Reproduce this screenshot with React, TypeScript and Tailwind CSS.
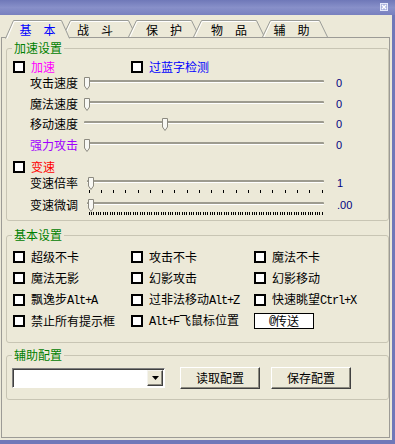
import React from "react";

// 小工具: 复选框、等宽片段、滑块、标签页
function Mono({ children }: { children: React.ReactNode }) {
  return (
    <span className="font-['Liberation_Mono',monospace] text-[12px] tracking-[-1.2px]">
      {children}
    </span>
  );
}

function Check({ label, color = "text-black" }: { label: React.ReactNode; color?: string }) {
  return (
    <div className="flex h-[16px] items-center">
      <span className="h-[12px] w-[12px] shrink-0 border-2 border-black bg-white" />
      <span className={`ml-[6px] whitespace-nowrap leading-[16px] ${color}`}>{label}</span>
    </div>
  );
}

interface SliderProps {
  cls: string;
  width: number;
  thumb: string;
  ticks?: number;
}

function Slider({ cls, width, thumb, ticks = 0 }: SliderProps) {
  const xs =
    ticks > 0
      ? Array.from({ length: ticks }, (_, i) => Math.round((2 + (i * (width - 4)) / (ticks - 1)) * 10) / 10)
      : [];
  return (
    <div className={`relative h-[16px] shrink-0 ${cls}`}>
      <div className="mt-[5px] h-[3px] rounded-[1px] border-t-2 border-[#9d9b8f] bg-white" />
      <svg className={`absolute top-[2px] ${thumb}`} width="6" height="13" viewBox="0 0 6 13">
        <path d="M0.5 0.5H5.5V9L3 12.5L0.5 9Z" fill="#f8f8f4" stroke="#8c8a80" />
      </svg>
      {ticks > 0 && (
        <svg className="absolute left-0 top-[15px]" width={width} height="3">
          {xs.map((x, i) => (
            <line key={i} x1={x} x2={x} y1="0" y2="3" stroke="#000" strokeWidth="1" shapeRendering="crispEdges" />
          ))}
        </svg>
      )}
    </div>
  );
}

function SliderRow({
  label,
  color = "text-black",
  thumb,
  value,
}: {
  label: string;
  color?: string;
  thumb: string;
  value: string;
}) {
  return (
    <div className="flex h-[16px] items-center">
      <span className={`w-[54px] shrink-0 leading-[16px] ${color}`}>{label}</span>
      <Slider cls="w-[240px]" width={240} thumb={thumb} />
      <span className="ml-[12px] font-['Liberation_Sans',sans-serif] text-[11px] leading-[16px] text-[#000080]">
        {value}
      </span>
    </div>
  );
}

function Tab({
  label,
  cls,
  w,
  active = false,
}: {
  label: string;
  cls: string;
  w: number;
  active?: boolean;
}) {
  const b = active ? 18.5 : 17;
  return (
    <div className={`relative h-[18px] shrink-0 ${cls} ${active ? "z-20" : "z-10"}`}>
      <svg className="absolute left-0 top-0" width={w} height="19">
        <path d={`M0.5 ${b}L8.5 0.5H${w - 8.5}L${w - 0.5} ${b}`} fill="#ece9d8" stroke="#9a9c98" />
        <path d={`M2 ${b}L9.3 1.5H${w - 9.3}`} fill="none" stroke="#ffffff" />
      </svg>
      <span className={`relative flex h-full items-center justify-center pt-[2px] leading-[16px] ${active ? "text-[#0000ff]" : "text-black"}`}>
        {label}
      </span>
    </div>
  );
}

function Group({ title, cls, children }: { title: string; cls: string; children: React.ReactNode }) {
  return (
    <div className={`relative ml-[3px] w-[383px] rounded-[3px] border border-[#c8c5b4] ${cls}`}>
      <span className="absolute -top-[8px] left-[5px] bg-[#ece9d8] px-[2px] leading-[14px] text-[#008000]">
        {title}
      </span>
      {children}
    </div>
  );
}

const btn =
  "flex h-[22px] w-[80px] items-center justify-center border border-b-[#404040] border-l-white border-r-[#404040] border-t-white bg-[#ece9d8] shadow-[inset_-1px_-1px_0_#8d8b80] leading-[16px]";

export default function App() {
  return (
    <div className="flex h-[444px] w-[395px] flex-col overflow-hidden bg-[#ece9d8] font-['Noto_Sans_CJK_SC',sans-serif] text-[12px] text-black">
      {/* 标题栏 */}
      <div className="flex h-[15px] shrink-0 items-start justify-end bg-gradient-to-b from-[#6f78b8] via-[#8890c9] to-[#7880bf] pr-[7px] pt-[3px]">
        <svg width="8" height="8" viewBox="0 0 8 8">
          <rect x="0.5" y="0.5" width="7" height="7" fill="#aab2de" stroke="#e4e8fa" />
          <path d="M2 2L6 6M6 2L2 6" stroke="#ffffff" strokeWidth="1.3" />
        </svg>
      </div>

      <div className="flex flex-1">
        <div className="flex w-[392px] flex-col pl-[1px] pr-[2px]">
          {/* 标签页 */}
          <div className="relative z-10 -mb-[1px] flex h-[23px] pt-[5px]">
            <Tab label={"基\u3000本"} cls="ml-[4px] w-[65px]" w={65} active />
            <Tab label={"战\u3000斗"} cls="-ml-[8px] w-[75px] pr-[9px]" w={75} />
            <Tab label={"保\u3000护"} cls="-ml-[9px] w-[72px]" w={72} />
            <Tab label={"物\u3000品"} cls="-ml-[7px] w-[72px]" w={72} />
            <Tab label={"辅\u3000助"} cls="-ml-[3px] w-[66px] pr-[7px]" w={66} />
          </div>

          <div className="h-[401px] border border-[#9c9b96] pl-[1px]">
            {/* 加速设置 */}
            <Group title="加速设置" cls="mt-[10px] h-[173px]">
              <div className="pl-[6px] pt-[10px]">
                <div className="grid grid-cols-[118px_1fr]">
                  <Check label="加速" color="text-[#ff00ff]" />
                  <Check label="过蓝字检测" color="text-[#0000ff]" />
                </div>
                <div className="ml-[17px] flex flex-col gap-[4.5px]">
                  <SliderRow label="攻击速度" thumb="left-0" value="0" />
                  <SliderRow label="魔法速度" thumb="left-0" value="0" />
                  <SliderRow label="移动速度" thumb="left-[78px]" value="0" />
                  <SliderRow label="强力攻击" color="text-[#a000ff]" thumb="left-0" value="0" />
                </div>
                <div className="mt-[6.5px]">
                  <Check label="变速" color="text-[#ff0000]" />
                </div>
                <div className="ml-[17px] flex h-[16px] items-center">
                  <span className="w-[57px] shrink-0 leading-[16px]">变速倍率</span>
                  <Slider cls="w-[237px]" width={237} thumb="left-[1px]" ticks={20} />
                  <span className="ml-[13px] font-['Liberation_Sans',sans-serif] text-[11px] leading-[16px] text-[#000080]">1</span>
                </div>
                <div className="ml-[17px] mt-[6px] flex h-[16px] items-center">
                  <span className="w-[57px] shrink-0 leading-[16px]">变速微调</span>
                  <Slider cls="w-[237px]" width={237} thumb="left-[1px]" ticks={101} />
                  <span className="ml-[13px] font-['Liberation_Sans',sans-serif] text-[11px] leading-[16px] text-[#000080]">.00</span>
                </div>
              </div>
            </Group>

            {/* 基本设置 */}
            <Group title="基本设置" cls="mt-[14px] h-[108px]">
              <div className="grid grid-cols-[118px_123px_1fr] gap-y-[5.33px] pl-[6px] pt-[13px]">
                <Check label="超级不卡" />
                <Check label="攻击不卡" />
                <Check label="魔法不卡" />
                <Check label="魔法无影" />
                <Check label="幻影攻击" />
                <Check label="幻影移动" />
                <Check label={<>飘逸步<Mono>Alt+A</Mono></>} />
                <Check label={<>过非法移动<Mono>Alt+Z</Mono></>} />
                <Check label={<>快速眺望<Mono>Ctrl+X</Mono></>} />
                <Check label="禁止所有提示框" />
                <Check label={<><Mono>Alt+F</Mono>飞鼠标位置</>} />
                <div className="flex h-[16px] w-[60px] items-center justify-center border border-black bg-white leading-[14px]">
                  <Mono>@</Mono>传送
                </div>
              </div>
            </Group>

            {/* 辅助配置 */}
            <Group title="辅助配置" cls="mt-[12px] h-[45px]">
              <div className="flex items-center pl-[5px] pt-[11px]">
                <div className="flex h-[20px] w-[153px] justify-end border border-b-white border-l-[#7f7f7f] border-r-white border-t-[#7f7f7f] bg-white p-[1px] shadow-[inset_1px_1px_0_#404040]">
                  <div className="flex w-[16px] items-center justify-center border border-b-[#404040] border-l-[#f4f3ee] border-r-[#404040] border-t-[#f4f3ee] bg-[#ece9d8] shadow-[inset_-1px_-1px_0_#8d8b80]">
                    <svg width="7" height="4" viewBox="0 0 7 4">
                      <path d="M0 0H7L3.5 4Z" fill="#000" />
                    </svg>
                  </div>
                </div>
                <div className={`ml-[15px] ${btn}`}>读取配置</div>
                <div className={`ml-[11px] ${btn}`}>保存配置</div>
              </div>
            </Group>
          </div>
        </div>
        <div className="w-[3px] bg-[#7078b8]" />
      </div>
      <div className="h-[4px] shrink-0 bg-[#7078b8]" />
    </div>
  );
}
